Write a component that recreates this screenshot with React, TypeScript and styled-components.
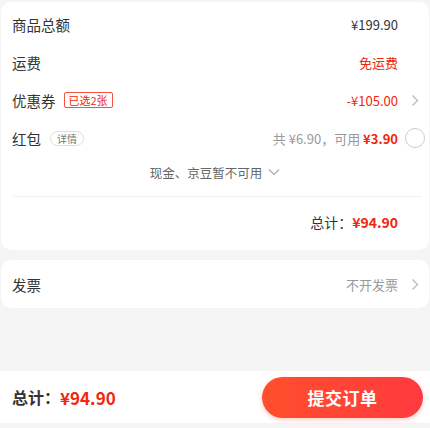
import React from "react";
import styled, { createGlobalStyle } from "styled-components";

const GlobalStyle = createGlobalStyle`
  html, body {
    margin: 0;
    padding: 0;
    background: #f5f5f5;
    font-family: "Noto Sans CJK SC", "Noto Sans", sans-serif;
    color: #333;
  }
`;

const Page = styled.div`
  height: 428px;
  display: flex;
  flex-direction: column;
  background: #f5f5f5;
`;

const Card = styled.div<{ $top: number }>`
  margin: ${(p) => p.$top}px 1px 0;
  background: #fff;
  border-radius: 10px;
  padding: 3px 0;
`;

const Row = styled.div<{ $h?: number }>`
  display: flex;
  align-items: center;
  height: ${(p) => p.$h ?? 38}px;
  padding: 0 3px 0 11px;
`;

const Label = styled.span`
  font-size: 14.5px;
  color: #333;
`;

const Spacer = styled.div`
  flex: 1;
`;

const Value = styled.span<{ $color?: string }>`
  font-size: 13px;
  color: ${(p) => p.$color ?? "#333"};
`;

const Red = styled.span<{ $bold?: boolean }>`
  color: #f2270c;
  font-weight: ${(p) => (p.$bold ? 700 : 400)};
`;

const Trail = styled.div`
  width: 22px;
  margin-left: 6px;
  display: flex;
  align-items: center;
  justify-content: center;
`;

const CouponTag = styled.span`
  margin-left: 8px;
  height: 14px;
  padding: 0 4px;
  border: 1px solid #f5533d;
  border-radius: 2px;
  font-size: 11px;
  line-height: 14px;
  color: #f2270c;
`;

const DetailTag = styled.span`
  margin-left: 9px;
  height: 13px;
  padding: 0 6px;
  border: 1px solid #ddd;
  border-radius: 8px;
  font-size: 10px;
  line-height: 13px;
  color: #777;
`;

const Radio = styled.span`
  width: 18px;
  height: 18px;
  border: 1.5px solid #ccc;
  border-radius: 50%;
`;

const NoteRow = styled.div`
  height: 30px;
  display: flex;
  align-items: center;
  justify-content: center;
  gap: 6px;
  font-size: 12.5px;
  color: #666;
`;

const Divider = styled.div`
  height: 1px;
  margin: 9px 7px 0 12px;
  background: #f0f0f0;
`;

const TotalText = styled.span`
  font-size: 14px;
  color: #333;
`;

const TotalPrice = styled.span`
  font-size: 14px;
  font-weight: 700;
  color: #f2270c;
`;

const Grow = styled.div`
  flex: 1;
`;

const BottomBar = styled.div`
  height: 52px;
  margin-bottom: 5px;
  background: #fff;
  display: flex;
  align-items: center;
  padding: 0 7px 0 12px;
`;

const BarLabel = styled.span`
  font-size: 16px;
  font-weight: 700;
  color: #333;
`;

const BarPrice = styled.span`
  font-size: 17px;
  font-weight: 700;
  color: #f2270c;
`;

const SubmitButton = styled.button`
  margin-left: auto;
  width: 161px;
  height: 41px;
  border: none;
  border-radius: 21px;
  background: linear-gradient(90deg, #ff4f2b, #ff3a3f);
  box-shadow: 0 2px 5px rgba(255, 60, 40, 0.25);
  color: #fff;
  font-family: inherit;
  font-size: 17px;
  font-weight: 700;
  letter-spacing: 0.5px;
`;

const ChevronRight = () => (
  <svg width="8" height="13" viewBox="0 0 8 13">
    <path d="M1.5 1.5 L6.5 6.5 L1.5 11.5" fill="none" stroke="#bbb" strokeWidth="1.4" />
  </svg>
);

const ChevronDown = () => (
  <svg width="12" height="8" viewBox="0 0 12 8">
    <path d="M1 1.5 L6 6.5 L11 1.5" fill="none" stroke="#aaa" strokeWidth="1.2" />
  </svg>
);

const App: React.FC = () => {
  return (
    <>
      <GlobalStyle />
      <Page>
        <Card $top={2}>
          <Row>
            <Label>商品总额</Label>
            <Spacer />
            <Value>¥199.90</Value>
            <Trail />
          </Row>
          <Row>
            <Label>运费</Label>
            <Spacer />
            <Value $color="#f2270c">免运费</Value>
            <Trail />
          </Row>
          <Row>
            <Label>优惠券</Label>
            <CouponTag>已选2张</CouponTag>
            <Spacer />
            <Value $color="#f2270c">-¥105.00</Value>
            <Trail>
              <ChevronRight />
            </Trail>
          </Row>
          <Row>
            <Label>红包</Label>
            <DetailTag>详情</DetailTag>
            <Spacer />
            <Value $color="#999">
              共 ¥6.90，可用 <Red $bold>¥3.90</Red>
            </Value>
            <Trail>
              <Radio />
            </Trail>
          </Row>
          <NoteRow>
            现金、京豆暂不可用
            <ChevronDown />
          </NoteRow>
          <Divider />
          <Row $h={50}>
            <Spacer />
            <TotalText>总计：</TotalText>
            <TotalPrice>¥94.90</TotalPrice>
            <Trail />
          </Row>
        </Card>
        <Card $top={10}>
          <Row $h={42}>
            <Label>发票</Label>
            <Spacer />
            <Value $color="#999">不开发票</Value>
            <Trail>
              <ChevronRight />
            </Trail>
          </Row>
        </Card>
        <Grow />
        <BottomBar>
          <BarLabel>总计：</BarLabel>
          <BarPrice>¥94.90</BarPrice>
          <SubmitButton>提交订单</SubmitButton>
        </BottomBar>
      </Page>
    </>
  );
};

export default App;
